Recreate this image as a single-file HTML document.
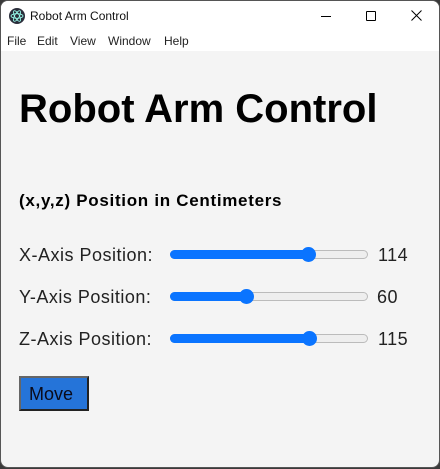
<!DOCTYPE html>
<html><head><style>
html,body{margin:0;padding:0;width:440px;height:469px;overflow:hidden;background:#3a3a3a;font-family:"Liberation Sans",sans-serif;}
.win{position:absolute;left:0;top:0;width:438px;height:466px;border:1px solid #555;border-radius:8px;background:#f4f4f4;overflow:hidden;}
.title{position:absolute;left:0;top:0;width:100%;height:30px;background:#fff;}
.menu{position:absolute;left:0;top:30px;width:100%;height:20px;background:#fff;font-size:12px;color:#222;}
.menu span{position:absolute;top:3px;}
.t{position:absolute;color:#000;white-space:nowrap;}
.lbl{font-size:18px;letter-spacing:0.5px;color:#222;}
.track{position:absolute;height:7px;border:1px solid #bbb;border-radius:5px;background:#eee;width:196px;left:169px;}
.fill{position:absolute;left:-1px;top:-1px;height:9px;border-radius:5px;background:#0a74ff;}
.thumb{position:absolute;top:-4px;width:15px;height:15px;border-radius:50%;background:#0a74ff;}
</style></head><body>
<div class="win">
<div class="title">
<svg style="position:absolute;left:8px;top:7px" width="16" height="16" viewBox="0 0 16 16"><circle cx="8" cy="8" r="8" fill="#2b2e3b"/><ellipse cx="8" cy="8" rx="6" ry="2.3" fill="none" stroke="#9fe" stroke-width="0.8"/><ellipse cx="8" cy="8" rx="6" ry="2.3" fill="none" stroke="#9fe" stroke-width="0.8" transform="rotate(60 8 8)"/><ellipse cx="8" cy="8" rx="6" ry="2.3" fill="none" stroke="#9fe" stroke-width="0.8" transform="rotate(-60 8 8)"/></svg>
<span class="t" style="left:29px;top:8px;font-size:12px;color:#111">Robot Arm Control</span>
<div style="position:absolute;left:320px;top:15px;width:10px;height:1px;background:#000"></div>
<div style="position:absolute;left:365px;top:10px;width:8px;height:8px;border:1px solid #000;border-radius:1px"></div>
<svg style="position:absolute;left:410px;top:9px" width="11" height="11"><path d="M0.5 0.5L10.5 10.5M10.5 0.5L0.5 10.5" stroke="#000" stroke-width="1"/></svg>
</div>
<div class="menu"><span style="left:6px">File</span><span style="left:36px">Edit</span><span style="left:69px">View</span><span style="left:107px">Window</span><span style="left:163px">Help</span></div>
<span class="t" style="left:18px;top:86px;font-size:40px;font-weight:bold">Robot Arm Control</span>
<span class="t" style="left:18px;top:190px;font-size:17px;letter-spacing:0.7px;font-weight:bold">(x,y,z) Position in Centimeters</span>
<span class="t lbl" style="left:18px;top:244px">X-Axis Position:</span>
<div class="track" style="top:249px"><div class="fill" style="width:140px"></div><div class="thumb" style="left:130px"></div></div>
<span class="t lbl" style="left:377px;top:244px">114</span>
<span class="t lbl" style="left:18px;top:286px">Y-Axis Position:</span>
<div class="track" style="top:291px"><div class="fill" style="width:78px"></div><div class="thumb" style="left:68px"></div></div>
<span class="t lbl" style="left:376px;top:286px">60</span>
<span class="t lbl" style="left:18px;top:328px">Z-Axis Position:</span>
<div class="track" style="top:333px"><div class="fill" style="width:141px"></div><div class="thumb" style="left:131px"></div></div>
<span class="t lbl" style="left:377px;top:328px">115</span>
<div style="position:absolute;left:18px;top:375px;width:66px;height:31px;background:#2574d9;border:2px solid #333;border-color:#666 #222 #222 #666"></div>
<span class="t" style="left:28px;top:383px;font-size:18px;color:#0a0a1a">Move</span>
</div>
</body></html>
